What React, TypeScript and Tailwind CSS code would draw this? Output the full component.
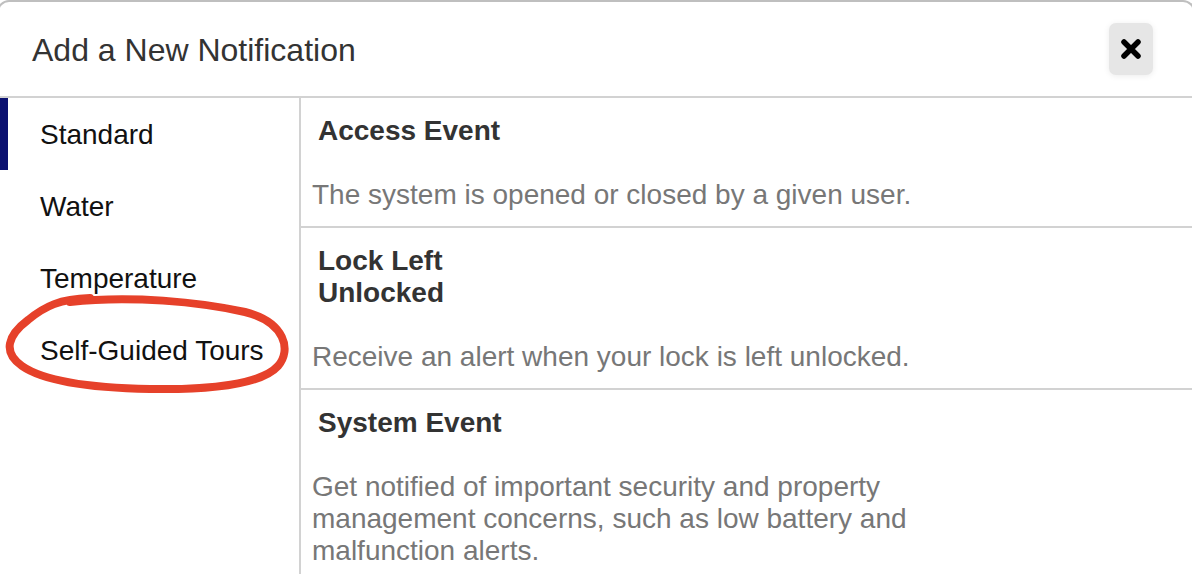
import React from "react";

const categories = ["Standard", "Water", "Temperature", "Self-Guided Tours"];

const events = [
  {
    title: "Access Event",
    desc: "The system is opened or closed by a given user.",
  },
  {
    title: "Lock Left Unlocked",
    desc: "Receive an alert when your lock is left unlocked.",
  },
  {
    title: "System Event",
    desc: "Get notified of important security and property management concerns, such as low battery and malfunction alerts.",
  },
];

const App = () => {
  return (
    <div className="relative h-[574px] w-full overflow-hidden bg-white font-['Liberation_Sans',Helvetica,Arial,sans-serif]">
      <div className="-mx-[3px] h-full rounded-t-[12px] border-x-2 border-t-2 border-[#bfbfbf] bg-white">
        {/* header */}
        <div className="flex h-[96px] items-center justify-between border-b-2 border-[#d2d2d2] pl-[33px] pr-[40px]">
          <h1 className="text-[32px] leading-[40px] text-[#333] mt-[2px]">
            Add a New Notification
          </h1>
          <button className="flex h-[52px] w-[44px] items-center justify-center rounded-[7px] bg-[#e6e6e6] shadow-[0_1px_6px_rgba(0,0,0,0.08)]">
            <svg width="22" height="22" viewBox="0 0 22 22">
              <path
                d="M4 4 L18 18 M18 4 L4 18"
                stroke="#000"
                strokeWidth="5.5"
                strokeLinecap="round"
              />
            </svg>
          </button>
        </div>

        {/* body */}
        <div className="flex h-full">
          <div className="w-[302px] shrink-0 border-r-2 border-[#d2d2d2]">
            {categories.map((c, i) => (
              <div
                key={c}
                className={
                  i === 0
                    ? "border-l-[9px] border-[#0b1170] pt-[21px] pb-[19px] pl-[32px] text-[28px] leading-[32px] text-[#111]"
                    : "border-l-[9px] border-transparent pt-[21px] pb-[19px] pl-[32px] text-[28px] leading-[32px] text-[#111]"
                }
              >
                {c}
              </div>
            ))}
          </div>

          <div className="flex-1">
            {events.map((e) => (
              <div
                key={e.title}
                className="border-b-2 border-[#d2d2d2] pt-[17px] pb-[15px] pl-[11px]"
              >
                <div className="max-w-[220px] pl-[6px] text-[28px] font-bold leading-[32px] text-[#333]">
                  {e.title}
                </div>
                <p className="mt-8 max-w-[640px] text-[28px] leading-[32px] text-[#777]">
                  {e.desc}
                </p>
              </div>
            ))}
          </div>
        </div>
      </div>

      {/* hand-drawn annotation */}
      <svg
        className="pointer-events-none absolute inset-0"
        width="1192"
        height="574"
        viewBox="0 0 1192 574"
      >
        <path
          d="M 70 302 C 130 295, 200 302, 245 312 C 285 322, 292 350, 278 366 C 262 384, 210 390, 150 389 C 95 388, 45 382, 22 366 C 2 352, 8 335, 28 320 C 45 306, 60 299, 90 298"
          fill="none"
          stroke="#e6412a"
          strokeWidth="8"
          strokeLinecap="round"
        />
      </svg>
    </div>
  );
};

export default App;
